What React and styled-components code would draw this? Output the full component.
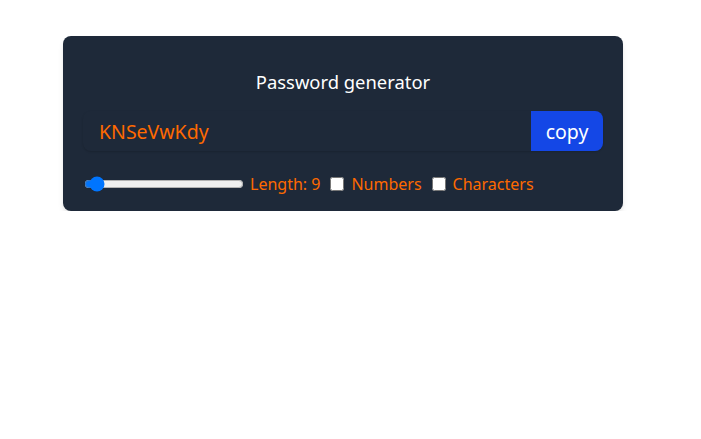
import React, { useState } from "react";
import styled, { createGlobalStyle } from "styled-components";

const GlobalStyle = createGlobalStyle`
    body {
        margin: 0;
        background: #ffffff;
        font-family: "Noto Sans", "Open Sans", sans-serif;
    }
`

function App() {
    const [length, setLength] = useState(9);
    const [numbers, setNumbers] = useState(false);
    const [chars, setChars] = useState(false);

    return (
        <>
            <GlobalStyle />
            <Card>
                <Title>Password generator</Title>
                <InputRow>
                    <PasswordField type="text" value="KNSeVwKdy" readOnly placeholder="Password" />
                    <CopyBtn>copy</CopyBtn>
                </InputRow>
                <Options>
                    <Slider
                        type="range"
                        min={6}
                        max={100}
                        value={length}
                        onChange={(e) => setLength(Number(e.target.value))}
                    />
                    <Label>Length: {length}</Label>
                    <Check type="checkbox" id="numbers" checked={numbers} onChange={() => setNumbers(!numbers)} />
                    <Label htmlFor="numbers">Numbers</Label>
                    <Check type="checkbox" id="chars" checked={chars} onChange={() => setChars(!chars)} />
                    <Label htmlFor="chars">Characters</Label>
                </Options>
            </Card>
        </>
    )
}

const Card = styled.div`
    width: 560px;
    box-sizing: border-box;
    margin: 36px 0 0 63px;
    padding: 32px 20px 15px;
    background: #1e2939;
    border-radius: 8px;
    box-shadow: 0 4px 6px -1px rgba(0, 0, 0, 0.1), 0 2px 4px -2px rgba(0, 0, 0, 0.1);
    color: #ff6900;
`

const Title = styled.h1`
    margin: 0 0 15px;
    font-size: 18.4px;
    line-height: 28px;
    font-weight: 400;
    color: #ffffff;
    text-align: center;
`

const InputRow = styled.div`
    display: flex;
    height: 40px;
    border-radius: 8px;
    overflow: hidden;
    box-shadow: 0 1px 2px rgba(0, 0, 0, 0.15);
`

const PasswordField = styled.input`
    flex: 1;
    min-width: 0;
    border: none;
    outline: none;
    background: transparent;
    padding: 0 16px;
    font-family: inherit;
    font-size: 19.5px;
    color: #ff6900;
`

const CopyBtn = styled.button`
    flex-shrink: 0;
    width: 72px;
    border: none;
    background: #1447e6;
    color: #ffffff;
    font-family: inherit;
    font-size: 19.5px;
    cursor: pointer;
`

const Options = styled.div`
    display: flex;
    align-items: center;
    margin-top: 21px;
    height: 24px;
    font-size: 16px;
`

const Slider = styled.input`
    width: 160px;
    margin: 0 6px 0 1px;
    cursor: pointer;
`

const Label = styled.label`
    line-height: 24px;
`

const Check = styled.input`
    margin: 0 7px 0 10px;
    width: 14px;
    height: 14px;
`

export default App
